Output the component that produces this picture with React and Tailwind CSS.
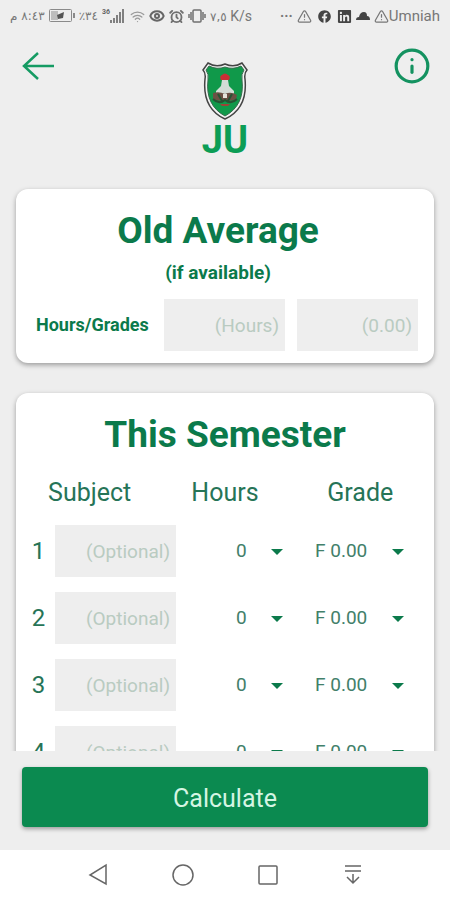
import { useState } from 'react'
import { AlarmClock, Eye, Info, TriangleAlert, Vibrate, Wifi } from 'lucide-react'
import { FaFacebook, FaLinkedin } from 'react-icons/fa'

const HOURS = ['0', '1', '2', '3', '4', '5', '6']
const GRADES = ['F 0.00', 'D- 0.75', 'D 1.00', 'D+ 1.25', 'C 2.00', 'B 3.00', 'A 4.00']
const ROWS = [1, 2, 3, 4]

function StatusBar() {
  return (
    <div className="flex h-8 shrink-0 items-center justify-between whitespace-nowrap px-2.5 text-sm text-[#777777]">
      <div className="flex items-center gap-1">
        <span dir="rtl" className="font-['DejaVu_Sans',sans-serif] text-xs">٨:٤٣ م</span>
        <svg width="26" height="14" viewBox="0 0 26 14" aria-hidden="true">
          <rect x="0.5" y="0.5" width="22" height="12" rx="1" fill="none" stroke="#8a8a8a" />
          <rect x="2" y="2" width="7" height="9" fill="#bdbdbd" />
          <rect x="24" y="4" width="2" height="5" fill="#8a8a8a" />
          <path d="M15 3 8 6l1 4 5-1z" fill="#555555" />
        </svg>
        <span className="font-['DejaVu_Sans',sans-serif] text-xs">٪٣٤</span>
        <svg width="24" height="16" viewBox="0 0 24 16" aria-hidden="true">
          <text x="0" y="6" fontSize="7" fontWeight="700" fill="#666666">36</text>
          <path d="M8 12h2v3H8zM11 10h2v5h-2zM14 7h2v8h-2zM17 4h2v11h-2zM20 1h2v14h-2z" fill="#808080" />
        </svg>
        <Wifi size={15} className="text-[#999999]" />
        <Eye size={16} strokeWidth={3} className="text-[#666666]" />
        <AlarmClock size={15} strokeWidth={3} className="text-[#707070]" />
        <svg width="18" height="14" viewBox="0 0 18 14" fill="none" stroke="#707070" strokeWidth="1.5" aria-hidden="true">
          <rect x="5" y="1" width="8" height="12" rx="1" />
          <path d="M3 3v8M15 3v8M1 5v4M17 5v4" />
        </svg>
        <span>
          <span className="font-['DejaVu_Sans',sans-serif] text-xs">٧,٥</span> K/s
        </span>
      </div>
      <div className="flex items-center gap-1">
        <span className="font-bold">···</span>
        <TriangleAlert size={15} />
        <FaFacebook size={13} className="mx-0.5 text-[#444444]" />
        <FaLinkedin size={15} className="text-[#444444]" />
        <svg width="14" height="8" viewBox="0 0 14 8" aria-hidden="true">
          <path d="M0 8q0-3 3-3 1-5 5-5 3 0 3 4 3 0 3 4z" fill="#444444" />
        </svg>
        <div className="flex items-center">
          <TriangleAlert size={15} />
          <span className="text-[15px] leading-4">Umniah</span>
        </div>
      </div>
    </div>
  )
}

function Crest() {
  return (
    <svg width="46" height="58" viewBox="0 0 46 58" role="img" aria-label="University crest">
      <path
        d="M6 1q8 5 17 1 9 4 17-1l5 7q-3 3-2 9c2 20-5 33-20 40C8 50 1 37 3 17q1-6-2-9z"
        fill="#f4f4f4" stroke="#444444" strokeWidth="1.5"
      />
      <path
        d="M7 4q8 4 16 1 8 3 16-1l3 4q-3 4-2 10c2 17-4 29-17 36C10 47 4 35 6 18q1-6-2-10z"
        fill="#10994a" stroke="#356b4c" strokeWidth="1"
      />
      <path d="M19 18q-2-4 1-5 3-3 6 0 3 1 1 5z" fill="#c92f35" />
      <path d="M20 18h6l1 6 5 5v4H14v-4l5-5z" fill="#d3ddd6" />
      <path d="M11 31q6-2 12 1 6-3 12 1l-1 4q-5 3-11 1-6 2-12-1z" fill="#6b5144" />
      <path d="M11 37q6 6 12 1 6 5 12-1M16 32l4 7M30 32l-4 7" fill="none" stroke="#275334" strokeWidth="2" />
      <path d="M21 32h4v4h-4z" fill="#e4e4db" />
      <path d="M18 42h10l-2 2h-6z" fill="#9f4137" />
    </svg>
  )
}

function Dropdown({ label, options, className }) {
  const [value, setValue] = useState(options[0])
  return (
    <div className="relative">
      <select
        aria-label={label}
        value={value}
        onChange={(e) => setValue(e.target.value)}
        className={`h-13 w-full appearance-none bg-transparent pr-8 text-[19px] text-[#42806a] outline-none ${className}`}
      >
        {options.map((o) => (
          <option key={o}>{o}</option>
        ))}
      </select>
      <svg width="12" height="6" viewBox="0 0 12 6" className="pointer-events-none absolute right-3.5 top-6" aria-hidden="true">
        <path d="M0 0h12L6 6z" fill="#0b7a4b" />
      </svg>
    </div>
  )
}

function Field({ label, placeholder }) {
  return (
    <input
      aria-label={label}
      placeholder={placeholder}
      className="block h-13 w-full min-w-0 bg-[#eeeeee] pr-1.5 text-right text-[19px] text-[#0b7a4b] outline-none placeholder:text-[#b9cbc1]"
    />
  )
}

export default function App() {
  return (
    <div className="flex h-screen flex-col bg-[#eeeeee] font-[Roboto,sans-serif] text-[#0b7a4b]">
      <StatusBar />

      <header className="flex h-36 shrink-0 items-start justify-between px-4 pt-3">
        <button aria-label="Back" className="flex size-11 items-center justify-center">
          <svg width="34" height="30" viewBox="0 0 34 30" fill="none" stroke="#159b63" strokeWidth="2.5" aria-hidden="true">
            <path d="M33 15H3M17 2 3 15l14 13" />
          </svg>
        </button>
        <div className="flex flex-col items-center pt-4.5">
          <Crest />
          <span className="text-[38px] font-bold leading-10 text-[#0c9d55]">JU</span>
        </div>
        <button aria-label="Information" className="flex size-11 items-center justify-center">
          <Info size={38} strokeWidth={2} className="shrink-0 text-[#149260]" />
        </button>
      </header>

      <main className="min-h-0 flex-1 space-y-7.5 overflow-y-auto px-4 pt-[13px] [scrollbar-width:none]">
        <section className="rounded-xl bg-white px-4 pb-3 pt-5 shadow-[0_2px_5px_rgba(0,0,0,0.35)]">
          <div className="pr-3.5 text-center font-bold">
            <h1 className="text-[37px] leading-11">Old Average</h1>
            <p className="pt-2 text-[19px] leading-6">(if available)</p>
          </div>
          <div className="flex items-center gap-3 pt-3.5">
            <span className="w-30 shrink-0 pl-1 text-lg font-bold">Hours/Grades</span>
            <Field label="Hours" placeholder="(Hours)" />
            <Field label="Average" placeholder="(0.00)" />
          </div>
        </section>

        <section className="rounded-xl bg-white px-1.5 pb-4 pt-5 shadow-[0_2px_5px_rgba(0,0,0,0.35)]">
          <h2 className="text-center text-[37px] font-bold leading-11">This Semester</h2>
          <table className="mt-5 block w-full">
            <thead className="block">
              <tr className="grid grid-cols-3 text-[25px] leading-8 text-[#267457]">
                <th className="font-normal">Subject</th>
                <th className="font-normal">Hours</th>
                <th className="font-normal">Grade</th>
              </tr>
            </thead>
            <tbody className="flex flex-col gap-[15px] pt-4">
              {ROWS.map((n) => (
                <tr key={n} className="grid grid-cols-[33px_1fr_1fr_1fr] items-center pr-2.5">
                  <td className="text-center text-2xl text-[#267457]">{n}</td>
                  <td>
                    <Field label={`Subject ${n}`} placeholder="(Optional)" />
                  </td>
                  <td>
                    <Dropdown label={`Hours ${n}`} options={HOURS} className="pl-15" />
                  </td>
                  <td>
                    <Dropdown label={`Grade ${n}`} options={GRADES} className="pl-4.5" />
                  </td>
                </tr>
              ))}
            </tbody>
          </table>
        </section>
      </main>

      <div className="shrink-0 px-[22px] pb-[23px] pt-4">
        <button className="h-15 w-full rounded bg-[#0b8a50] pt-1 text-[25px] text-[#d5f5e3] shadow-[0_2px_4px_rgba(0,0,0,0.35)]">
          Calculate
        </button>
      </div>

      <nav className="flex h-12.5 shrink-0 items-center justify-center gap-[61px] bg-white text-[#666666]">
        <button aria-label="Back">
          <svg width="24" height="24" viewBox="0 0 24 24" fill="none" stroke="currentColor" strokeWidth="1.5"><path d="M20 2v19L4 12z" /></svg>
        </button>
        <button aria-label="Home">
          <svg width="24" height="24" viewBox="0 0 24 24" fill="none" stroke="currentColor" strokeWidth="1.5"><circle cx="12" cy="12" r="10" /></svg>
        </button>
        <button aria-label="Recent apps">
          <svg width="24" height="24" viewBox="0 0 24 24" fill="none" stroke="currentColor" strokeWidth="1.5"><rect x="3" y="3" width="18" height="18" rx="1" /></svg>
        </button>
        <button aria-label="Notifications">
          <svg width="24" height="24" viewBox="0 0 24 24" fill="none" stroke="currentColor" strokeWidth="1.5"><path d="M4 3h16M4 8h16M12 11v9M6 14l6 6 6-6" /></svg>
        </button>
      </nav>
    </div>
  )
}
